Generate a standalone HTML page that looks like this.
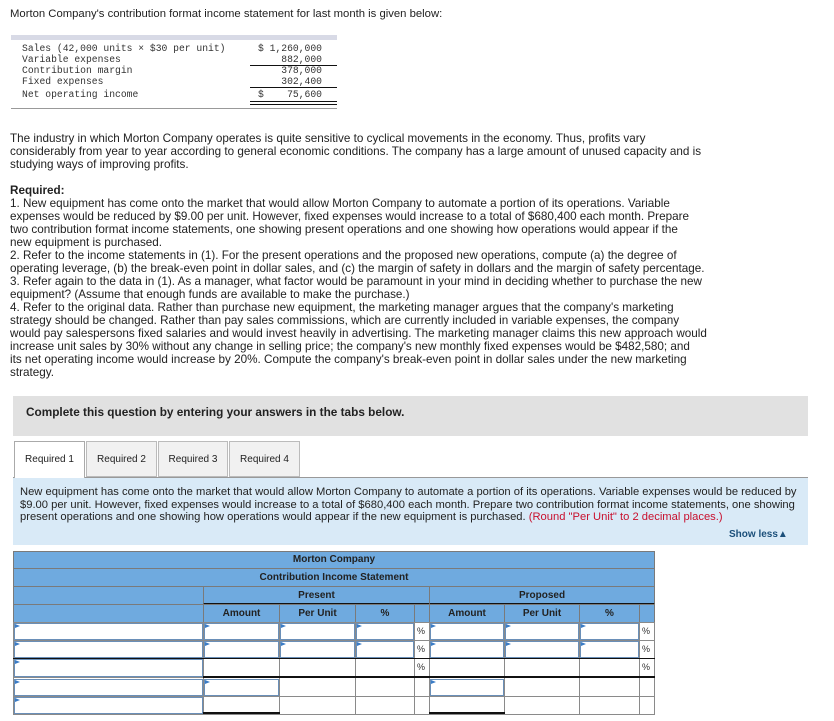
<!DOCTYPE html>
<html><head><meta charset="utf-8">
<style>
body{margin:0;width:834px;height:721px;position:relative;background:#fff;font-family:"Liberation Sans",sans-serif;color:#222;overflow:hidden}
.a{position:absolute;white-space:nowrap}
.p{font-size:11.7px;line-height:13px}
.m{font-family:"Liberation Mono",monospace;font-size:9.7px;line-height:11px;color:#333}
.t{position:absolute;box-sizing:border-box}
.hd{background:#6faadf;border:1px solid #7a7a7a;font-size:10px;font-weight:bold;color:#222;text-align:center;line-height:16px}
.c{border:1px solid #8a8a8a;background:#fff}
.in{position:absolute;background:#fff;border:1.5px solid #6a8fb8;box-sizing:border-box}
.in:before{content:"";position:absolute;left:0;top:0;border-left:5px solid #3a7cc6;border-top:2px solid transparent;border-bottom:2px solid transparent;}
.pc{font-size:9px;color:#333;position:absolute}
.n{font-size:11.2px;line-height:12.5px;letter-spacing:0}
</style></head><body>
<div class="a p" style="left:10px;top:8px;font-size:11.3px">Morton Company's contribution format income statement for last month is given below:</div>
<div class="t" style="left:11px;top:35px;width:326px;height:5px;background:#d8dae6"></div>
<div class="a m" style="left:22px;top:43px">Sales (42,000 units × $30 per unit)<br>Variable expenses<br>Contribution margin<br>Fixed expenses</div>
<div class="a m" style="left:22px;top:89px">Net operating income</div>
<div class="a m" style="left:254px;top:43px;text-align:right;width:68px">$ 1,260,000<br>882,000<br>378,000<br>302,400</div>
<div class="a m" style="left:258px;top:89px;width:64px">$<span style="float:right">75,600</span></div>
<div class="t" style="left:250px;top:65px;width:87px;height:1px;background:#111"></div>
<div class="t" style="left:250px;top:87px;width:87px;height:1px;background:#111"></div>
<div class="t" style="left:250px;top:101px;width:87px;height:4px;border-top:1px solid #111;border-bottom:1px solid #111"></div>
<div class="t" style="left:11px;top:108px;width:326px;height:1px;background:#999"></div>

<div class="a p" style="left:10px;top:132px">The industry in which Morton Company operates is quite sensitive to cyclical movements in the economy. Thus, profits vary<br>considerably from year to year according to general economic conditions. The company has a large amount of unused capacity and is<br>studying ways of improving profits.</div>
<div class="a p" style="left:10px;top:184px"><b>Required:</b><br>1. New equipment has come onto the market that would allow Morton Company to automate a portion of its operations. Variable<br>expenses would be reduced by $9.00 per unit. However, fixed expenses would increase to a total of $680,400 each month. Prepare<br>two contribution format income statements, one showing present operations and one showing how operations would appear if the<br>new equipment is purchased.<br>2. Refer to the income statements in (1). For the present operations and the proposed new operations, compute (a) the degree of<br>operating leverage, (b) the break-even point in dollar sales, and (c) the margin of safety in dollars and the margin of safety percentage.<br>3. Refer again to the data in (1). As a manager, what factor would be paramount in your mind in deciding whether to purchase the new<br>equipment? (Assume that enough funds are available to make the purchase.)<br>4. Refer to the original data. Rather than purchase new equipment, the marketing manager argues that the company's marketing<br>strategy should be changed. Rather than pay sales commissions, which are currently included in variable expenses, the company<br>would pay salespersons fixed salaries and would invest heavily in advertising. The marketing manager claims this new approach would<br>increase unit sales by 30% without any change in selling price; the company's new monthly fixed expenses would be $482,580; and<br>its net operating income would increase by 20%. Compute the company's break-even point in dollar sales under the new marketing<br>strategy.</div>

<div class="t" style="left:13px;top:396px;width:795px;height:40px;background:#e1e1e1"></div>
<div class="a" style="left:26px;top:405px;font-size:11.8px;font-weight:bold">Complete this question by entering your answers in the tabs below.</div>
<div class="t" style="left:13px;top:477px;width:795px;height:68px;background:#d9eaf7;border-top:1px solid #999"></div>
<div class="t" style="left:14px;top:441px;width:71px;height:37px;background:#fff;border:1px solid #aaa;border-bottom:none;font-size:10px;text-align:center;line-height:36px">Required 1</div>
<div class="t" style="left:86px;top:441px;width:71px;height:36px;background:#f1f1f1;border:1px solid #bbb;font-size:10px;text-align:center;line-height:36px">Required 2</div>
<div class="t" style="left:158px;top:441px;width:70px;height:36px;background:#f1f1f1;border:1px solid #bbb;font-size:10px;text-align:center;line-height:36px">Required 3</div>
<div class="t" style="left:229px;top:441px;width:71px;height:36px;background:#f1f1f1;border:1px solid #bbb;font-size:10px;text-align:center;line-height:36px">Required 4</div>
<div class="a n" style="left:20px;top:486px">New equipment has come onto the market that would allow Morton Company to automate a portion of its operations. Variable expenses would be reduced by<br>$9.00 per unit. However, fixed expenses would increase to a total of $680,400 each month. Prepare two contribution format income statements, one showing<br>present operations and one showing how operations would appear if the new equipment is purchased. <span style="color:#c8102e">(Round "Per Unit" to 2 decimal places.)</span></div>
<div class="a" style="left:729px;top:529px;font-size:10px;font-weight:bold;color:#1b4f7a">Show less▲</div>

<div class="t hd" style="left:13px;top:551px;width:642px;height:18px">Morton Company</div>
<div class="t hd" style="left:13px;top:568px;width:642px;height:19px;line-height:18px">Contribution Income Statement</div>
<div class="t hd" style="left:13px;top:586px;width:191px;height:19px"></div>
<div class="t hd" style="left:203px;top:586px;width:227px;height:19px;line-height:18px;border-bottom:2px solid #111">Present</div>
<div class="t hd" style="left:429px;top:586px;width:226px;height:19px;line-height:18px;border-bottom:2px solid #111">Proposed</div>
<div class="t hd" style="left:13px;top:604px;width:191px;height:19px"></div>
<div class="t hd" style="left:203px;top:604px;width:77px;height:19px;line-height:18px">Amount</div>
<div class="t hd" style="left:279px;top:604px;width:77px;height:19px;line-height:18px">Per Unit</div>
<div class="t hd" style="left:355px;top:604px;width:60px;height:19px;line-height:18px">%</div>
<div class="t hd" style="left:414px;top:604px;width:16px;height:19px"></div>
<div class="t hd" style="left:429px;top:604px;width:76px;height:19px;line-height:18px">Amount</div>
<div class="t hd" style="left:504px;top:604px;width:76px;height:19px;line-height:18px">Per Unit</div>
<div class="t hd" style="left:579px;top:604px;width:61px;height:19px;line-height:18px">%</div>
<div class="t hd" style="left:639px;top:604px;width:16px;height:19px"></div>

<div class="t c" style="left:13px;top:622px;width:642px;height:93px"></div>
<div class="t" style="left:203px;top:622px;width:1px;height:93px;background:#8a8a8a"></div>
<div class="t" style="left:279px;top:622px;width:1px;height:93px;background:#8a8a8a"></div>
<div class="t" style="left:355px;top:622px;width:1px;height:93px;background:#8a8a8a"></div>
<div class="t" style="left:414px;top:622px;width:1px;height:93px;background:#8a8a8a"></div>
<div class="t" style="left:429px;top:622px;width:1px;height:93px;background:#8a8a8a"></div>
<div class="t" style="left:504px;top:622px;width:1px;height:93px;background:#8a8a8a"></div>
<div class="t" style="left:579px;top:622px;width:1px;height:93px;background:#8a8a8a"></div>
<div class="t" style="left:639px;top:622px;width:1px;height:93px;background:#8a8a8a"></div>
<div class="t" style="left:13px;top:640px;width:642px;height:1px;background:#8a8a8a"></div>
<div class="t" style="left:13px;top:658px;width:642px;height:1px;background:#111"></div>
<div class="t" style="left:13px;top:677px;width:191px;height:1px;background:#8a8a8a"></div>
<div class="t" style="left:203px;top:676px;width:452px;height:2px;background:#111"></div>
<div class="t" style="left:13px;top:696px;width:642px;height:1px;background:#8a8a8a"></div>
<div class="t" style="left:203px;top:712px;width:77px;height:2px;background:#111"></div>
<div class="t" style="left:429px;top:712px;width:76px;height:2px;background:#111"></div>

<div class="in" style="left:14px;top:623px;width:189px;height:17px"></div>
<div class="in" style="left:204px;top:623px;width:75px;height:17px"></div>
<div class="in" style="left:280px;top:623px;width:75px;height:17px"></div>
<div class="in" style="left:356px;top:623px;width:58px;height:17px"></div>
<div class="in" style="left:430px;top:623px;width:74px;height:17px"></div>
<div class="in" style="left:505px;top:623px;width:74px;height:17px"></div>
<div class="in" style="left:580px;top:623px;width:59px;height:17px"></div>
<div class="in" style="left:14px;top:641px;width:189px;height:17px"></div>
<div class="in" style="left:204px;top:641px;width:75px;height:17px"></div>
<div class="in" style="left:280px;top:641px;width:75px;height:17px"></div>
<div class="in" style="left:356px;top:641px;width:58px;height:17px"></div>
<div class="in" style="left:430px;top:641px;width:74px;height:17px"></div>
<div class="in" style="left:505px;top:641px;width:74px;height:17px"></div>
<div class="in" style="left:580px;top:641px;width:59px;height:17px"></div>
<div class="in" style="left:14px;top:659px;width:189px;height:18px"></div>
<div class="in" style="left:14px;top:679px;width:189px;height:17px"></div>
<div class="in" style="left:204px;top:679px;width:75px;height:17px"></div>
<div class="in" style="left:430px;top:679px;width:74px;height:17px"></div>
<div class="in" style="left:14px;top:697px;width:189px;height:17px"></div>

<div class="pc" style="left:417px;top:626px">%</div>
<div class="pc" style="left:417px;top:644px">%</div>
<div class="pc" style="left:417px;top:662px">%</div>
<div class="pc" style="left:642px;top:626px">%</div>
<div class="pc" style="left:642px;top:644px">%</div>
<div class="pc" style="left:642px;top:662px">%</div>
</body></html>
